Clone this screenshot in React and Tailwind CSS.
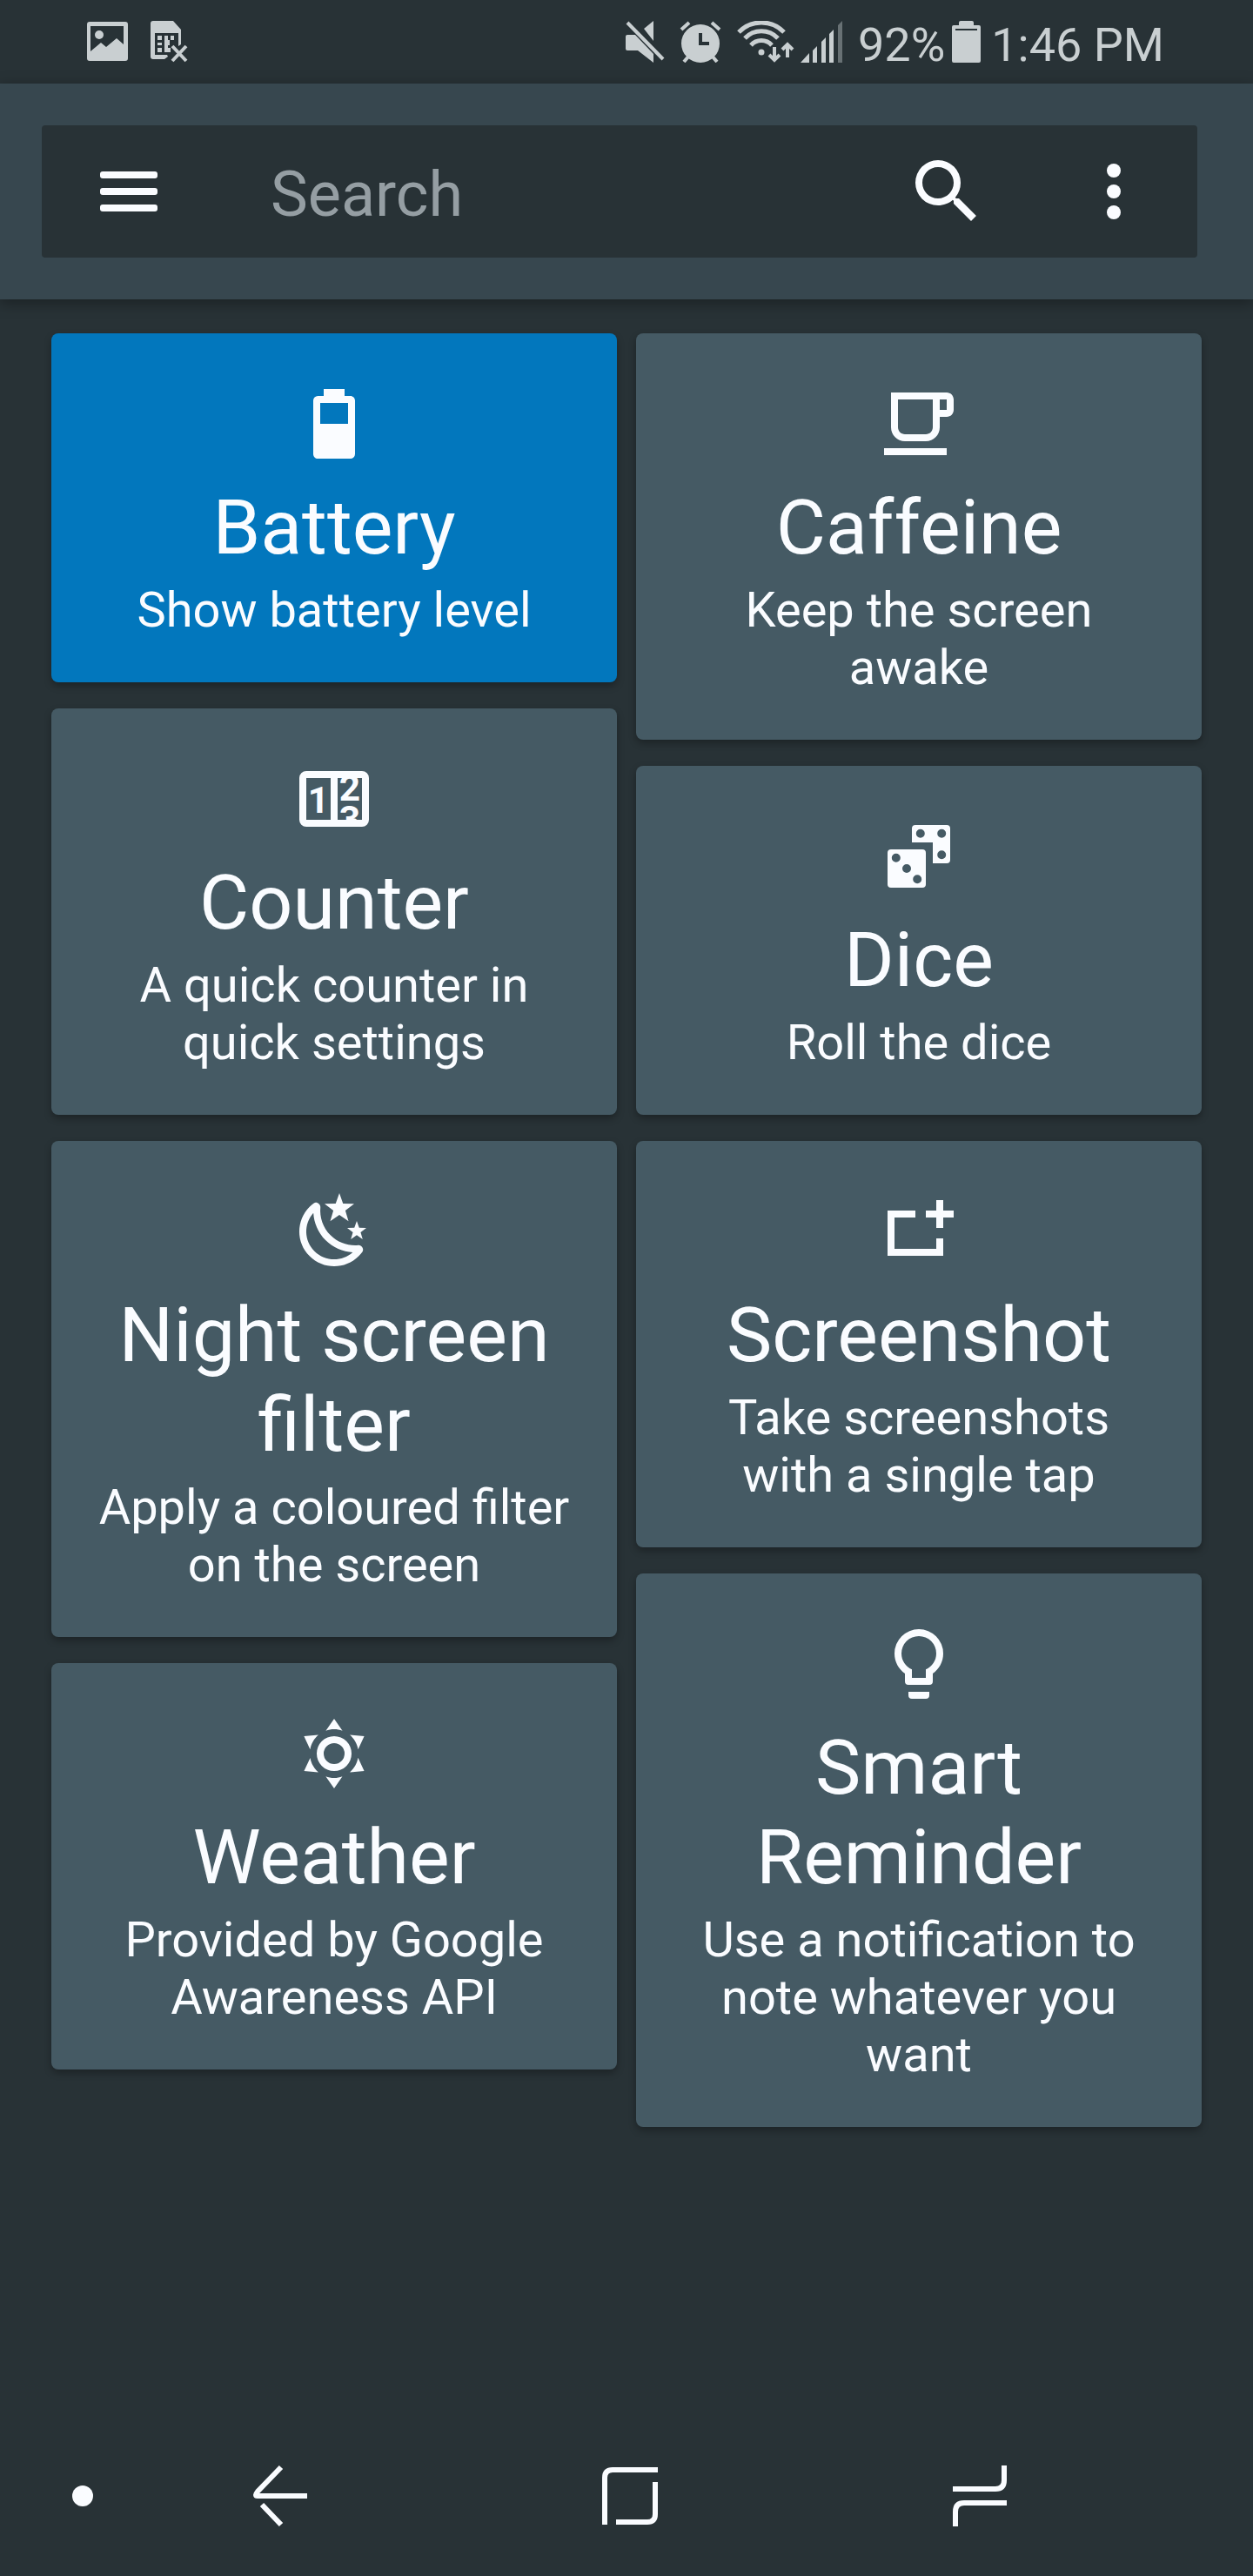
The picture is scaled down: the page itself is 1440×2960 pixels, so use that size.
import React, { useState } from 'react';

const tileIcons = {
  battery: (
    <path
      fillRule="evenodd"
      d="M16.67 4H15V2H9v2H7.33A1.33 1.33 0 0 0 6 5.33v15.34C6 21.4 6.6 22 7.33 22h9.34A1.33 1.33 0 0 0 18 20.67V5.33C18 4.6 17.4 4 16.67 4zM8 6h8v6H8z"
    />
  ),
  cup: (
    <path d="M16 5v8c0 1.1-.9 2-2 2H8c-1.1 0-2-.9-2-2V5h10m4-2H4v10c0 2.21 1.79 4 4 4h6c2.21 0 4-1.79 4-4v-3h2c1.1 0 2-.9 2-2V5c0-1.1-.9-2-2-2zm-2 5V5h2v3h-2zm2 11H2v2h18v-2z" />
  ),
  counter: (
    <>
      <clipPath id="counter-window">
        <rect x="4" y="6" width="16" height="12" />
      </clipPath>
      <path fillRule="evenodd" d="M4 4h16a2 2 0 0 1 2 2v12a2 2 0 0 1-2 2H4a2 2 0 0 1-2-2V6a2 2 0 0 1 2-2zM4 6v12h7V6zM13 6v12h7V6z" />
      <g clipPath="url(#counter-window)" fontSize="10.6" fontWeight="700" textAnchor="middle">
        <text x="7.5" y="16">1</text>
        <text x="16.5" y="12.5">2</text>
        <text x="16.5" y="21.4">3</text>
      </g>
    </>
  ),
  dice: (
    <path
      fillRule="evenodd"
      d="M4 10h9a1 1 0 0 1 1 1v9a1 1 0 0 1-1 1H4a1 1 0 0 1-1-1v-9a1 1 0 0 1 1-1zm1.45 1.2a1.25 1.25 0 1 0 0 2.5 1.25 1.25 0 0 0 0-2.5zm3.05 3.05a1.25 1.25 0 1 0 0 2.5 1.25 1.25 0 0 0 0-2.5zm3.05 3.05a1.25 1.25 0 1 0 0 2.5 1.25 1.25 0 0 0 0-2.5zM11 3h9a1 1 0 0 1 1 1v9a1 1 0 0 1-1 1h-4V8h-6V4a1 1 0 0 1 1-1zm1.45 1.2a1.25 1.25 0 1 0 0 2.5 1.25 1.25 0 0 0 0-2.5zm6.1 0a1.25 1.25 0 1 0 0 2.5 1.25 1.25 0 0 0 0-2.5zm0 6.1a1.25 1.25 0 1 0 0 2.5 1.25 1.25 0 0 0 0-2.5z"
    />
  ),
  night: (
    <path d="M17.75,4.09L15.22,6.03L16.13,9.09L13.5,7.28L10.87,9.09L11.78,6.03L9.25,4.09L12.44,4L13.5,1L14.56,4L17.75,4.09M21.25,11L19.61,12.25L20.2,14.23L18.5,13.06L16.8,14.23L17.39,12.25L15.75,11L17.81,10.95L18.5,9L19.19,10.95L21.25,11M18.97,15.95C19.8,15.87 20.69,17.05 20.16,17.8C19.84,18.25 19.5,18.67 19.08,19.07C15.17,23 8.84,23 4.94,19.07C1.03,15.17 1.03,8.83 4.94,4.93C5.34,4.53 5.76,4.17 6.21,3.85C6.96,3.32 8.14,4.21 8.06,5.04C7.79,7.9 8.75,10.87 10.95,13.06C13.14,15.26 16.1,16.22 18.97,15.95M17.33,17.97C14.5,17.81 11.7,16.64 9.53,14.5C7.36,12.31 6.2,9.5 6.04,6.68C3.23,9.82 3.34,14.64 6.35,17.66C9.37,20.67 14.19,20.78 17.33,17.97Z" />
  ),
  screenshot: <path d="M3 6h8v2H5v9h12v-3h2v5H3zM17 3h2v3h3v2h-3v3h-2V8h-3V6h3z" />,
  sun: (
    <path d="M12,7A5,5 0 0,1 17,12A5,5 0 0,1 12,17A5,5 0 0,1 7,12A5,5 0 0,1 12,7M12,9A3,3 0 0,0 9,12A3,3 0 0,0 12,15A3,3 0 0,0 15,12A3,3 0 0,0 12,9M12,2L14.39,5.42C13.65,5.15 12.84,5 12,5C11.16,5 10.35,5.15 9.61,5.42L12,2M3.34,7L7.5,6.65C6.9,7.16 6.36,7.78 5.94,8.5C5.5,9.24 5.25,10 5.11,10.79L3.34,7M3.36,17L5.12,13.23C5.26,14 5.53,14.78 5.95,15.5C6.37,16.24 6.91,16.86 7.5,17.37L3.36,17M20.65,7L18.88,10.79C18.74,10 18.47,9.23 18.05,8.5C17.63,7.78 17.1,7.15 16.5,6.64L20.65,7M20.64,17L16.5,17.36C17.09,16.85 17.62,16.22 18.04,15.5C18.46,14.77 18.73,14 18.87,13.21L20.64,17M12,22L9.59,18.56C10.33,18.83 11.14,19 12,19C12.82,19 13.63,18.83 14.37,18.56L12,22Z" />
  ),
  bulb: (
    <path d="M12,2A7,7 0 0,1 19,9C19,11.38 17.81,13.47 16,14.74V17A1,1 0 0,1 15,18H9A1,1 0 0,1 8,17V14.74C6.19,13.47 5,11.38 5,9A7,7 0 0,1 12,2M9,21V20H15V21A1,1 0 0,1 14,22H10A1,1 0 0,1 9,21M12,4A5,5 0 0,0 7,9C7,11.05 8.23,12.81 10,13.58V16H14V13.58C15.77,12.81 17,11.05 17,9A5,5 0 0,0 12,4Z" />
  )
};

const columns = [
  [
    { id: 'battery', icon: 'battery', title: 'Battery', text: 'Show battery level' },
    { id: 'counter', icon: 'counter', title: 'Counter', text: 'A quick counter in quick settings' },
    { id: 'night', icon: 'night', title: 'Night screen filter', text: 'Apply a coloured filter on the screen' },
    { id: 'weather', icon: 'sun', title: 'Weather', text: 'Provided by Google Awareness API' }
  ],
  [
    { id: 'caffeine', icon: 'cup', title: 'Caffeine', text: 'Keep the screen awake' },
    { id: 'dice', icon: 'dice', title: 'Dice', text: 'Roll the dice' },
    { id: 'screenshot', icon: 'screenshot', title: 'Screenshot', text: 'Take screenshots with a single tap' },
    { id: 'reminder', icon: 'bulb', title: 'Smart Reminder', text: 'Use a notification to note whatever you want' }
  ]
];

const StatusBar = () => (
  <div className="flex h-24 items-center justify-between bg-[#283236] pr-[102px] pl-[100px] text-[#c9cfd1]">
    <div className="flex items-center gap-[26px]">
      {/* Picture */}
      <svg className="h-12 w-[47px]" viewBox="0 0 47 48" fill="currentColor">
        <path fillRule="evenodd" d="M3 1h41a3 3 0 0 1 3 3v39a3 3 0 0 1-3 3H3a3 3 0 0 1-3-3V4a3 3 0 0 1 3-3zM4 6v29l12-10 6 5 12-10 8 7V6z" />
        <circle cx="14" cy="16" r="5" />
      </svg>
      {/* SIM missing */}
      <svg className="h-12 w-[43px]" viewBox="0 0 43 48" fill="currentColor">
        <path fillRule="evenodd" d="M3 0h23l9 10v17l-3 2V14H5v25h14l1 2-4 3H3a3 3 0 0 1-3-3V3a3 3 0 0 1 3-3z" />
        <path d="M8 17h5v5H8zM8 25h5v3H8zM8 31h5v5H8zM16 17h4v19h-4zM20 22h2v6h-2zM23 17h4v5h-4zM20 31h3v5h-3z" />
        <path d="M25 29l16 17M41 29L25 46" stroke="currentColor" strokeWidth="4" fill="none" />
      </svg>
    </div>
    <div className="flex items-center">
      {/* Muted */}
      <svg className="h-12 w-[46px]" viewBox="0 0 46 48" fill="currentColor">
        <path d="M21 9L32 0v23zM2 16h9l21 22v10L14 34H2a2 2 0 0 1-2-2V18a2 2 0 0 1 2-2z" />
        <path d="M2 2l41 42" stroke="currentColor" strokeWidth="4" />
      </svg>
      {/* Alarm */}
      <svg className="ml-4 h-12 w-12" viewBox="0 0 48 48" fill="currentColor">
        <path fillRule="evenodd" d="M24 4a22 22 0 1 1 0 44 22 22 0 0 1 0-44zM22 14v14h12v-4h-8V14z" />
        <path d="M2 10l9-8M46 10l-9-8M11 40l-6 7M37 40l6 7" stroke="currentColor" strokeWidth="4" />
      </svg>
      {/* Wi-Fi */}
      <svg className="ml-[18px] h-12 w-[66px]" viewBox="0 0 66 48" fill="none" stroke="currentColor" strokeWidth="5">
        <path d="M2 13a36 36 0 0 1 52 0M9 20a26 26 0 0 1 38 0M16 28a16 16 0 0 1 24 0" />
        <circle cx="28" cy="36" r="3.5" fill="currentColor" stroke="none" />
        <path d="M43 30v14M58 42V28" strokeWidth="4" />
        <path d="M37 39l6 6 6-6M52 33l6-6 6 6" strokeWidth="4" />
      </svg>
      {/* Signal */}
      <svg className="ml-[7px] h-12 w-[50px]" viewBox="0 0 50 48" fill="currentColor">
        <path d="M0 48L10 37v11zM14 34l5-5v19h-5zM24 24l5-5v29h-5zM33 15l5-5v38h-5z" />
        <path d="M43 5l5-5v48h-5z" opacity="0.4" />
      </svg>
      <span className="ml-4 pt-2 text-[54px] leading-[64px]">92%</span>
      {/* Charge */}
      <svg className="ml-2 h-12 w-[33px]" viewBox="0 0 33 48" fill="currentColor">
        <path fillRule="evenodd" d="M10 0h13a2 2 0 0 1 2 2v3h6a2 2 0 0 1 2 2v39a2 2 0 0 1-2 2H2a2 2 0 0 1-2-2V7a2 2 0 0 1 2-2h6V2a2 2 0 0 1 2-2zM4 9v2h25V9z" />
      </svg>
      <span className="ml-3 pt-2 text-[54px] leading-[64px]">1:46 PM</span>
    </div>
  </div>
);

const SearchHeader = ({ value, onChange }) => (
  <header className="bg-[#37474f] pt-12 pr-16 pb-12 pl-12 shadow-[0_4px_16px_rgba(0,0,0,0.35)]">
    <div className="flex h-[152px] items-center rounded bg-[#283236] pr-12 pl-[52px] text-[#fafcff]">
      <button type="button" aria-label="Menu">
        <svg className="size-24" viewBox="0 0 96 96" fill="currentColor">
          <rect x="15" y="25" width="66" height="8" rx="3" />
          <rect x="15" y="44" width="66" height="8" rx="3" />
          <rect x="15" y="63" width="66" height="8" rx="3" />
        </svg>
      </button>
      <input
        type="text"
        aria-label="Search"
        placeholder="Search"
        value={value}
        onChange={onChange}
        className="ml-[115px] h-24 min-w-0 flex-1 bg-transparent pt-[6px] text-[72px] leading-[90px] outline-none placeholder:text-[#959ea3]"
      />
      <button type="button" aria-label="Submit search">
        <svg className="size-24" viewBox="0 0 24 24" fill="currentColor">
          <path d="M15.5 14h-.79l-.28-.27A6.471 6.471 0 0 0 16 9.5 6.5 6.5 0 1 0 9.5 16c1.61 0 3.09-.59 4.23-1.57l.27.28v.79l5 4.99L20.49 19l-4.99-5zm-6 0C7.01 14 5 11.99 5 9.5S7.01 5 9.5 5 14 7.01 14 9.5 11.99 14 9.5 14z" />
        </svg>
      </button>
      <button type="button" aria-label="More options" className="ml-24">
        <svg className="size-24" viewBox="0 0 24 24" fill="currentColor">
          <circle cx="12" cy="6" r="2" />
          <circle cx="12" cy="12" r="2" />
          <circle cx="12" cy="18" r="2" />
        </svg>
      </button>
    </div>
  </header>
);

const Tile = ({ tile, active, onClick }) => (
  <button
    type="button"
    aria-pressed={active}
    onClick={onClick}
    className={`flex flex-col items-center rounded-lg px-12 pt-14 pb-[50px] text-center text-[#fafcff] shadow-[0_4px_8px_rgba(0,0,0,0.3)] ${active ? 'bg-[#0277bd]' : 'bg-[#455a64]'}`}
  >
    <svg className="size-24" viewBox="0 0 24 24" fill="currentColor">
      {tileIcons[tile.icon]}
    </svg>
    <span className="mt-[19px] text-[88px] leading-[103px]">{tile.title}</span>
    <span className="mt-[11px] text-[56px] leading-[66px]">{tile.text}</span>
  </button>
);

const NavBar = () => (
  <nav className="flex h-[184px] items-center gap-[14px] pr-[112px] pl-[83px] text-[#fafcff]">
    <span className="size-6 rounded-full bg-[#fafcff]" />
    <div className="grid flex-1 grid-cols-3 justify-items-center">
      <button type="button" aria-label="Back">
        <svg className="h-[72px] w-16" viewBox="0 0 64 72" fill="none" stroke="currentColor" strokeWidth="6">
          <path d="M33 3L6 31q-4 5 0 5h57M11 46l22 23" />
        </svg>
      </button>
      <button type="button" aria-label="Home">
        <svg className="h-[72px] w-16" viewBox="0 0 64 72" fill="none" stroke="currentColor" strokeWidth="6">
          <path d="M3 69V15Q3 6 12 6h52M61 20v37q0 9-9 9H16" />
        </svg>
      </button>
      <button type="button" aria-label="Recent apps">
        <svg className="h-[72px] w-16" viewBox="0 0 64 72" fill="none" stroke="currentColor" strokeWidth="6">
          <path d="M59 1v17q0 10-10 10H0M3 71V54q0-10 10-10h49" />
        </svg>
      </button>
    </div>
  </nav>
);

const App = () => {
  const [search, setSearch] = useState('');
  const [activeTile, setActiveTile] = useState('battery');

  const visible = (tile) => tile.title.toLowerCase().includes(search.toLowerCase());

  return (
    <div className="flex min-h-screen flex-col bg-[#283236] font-[Roboto,sans-serif]">
      <StatusBar />
      <SearchHeader value={search} onChange={(e) => setSearch(e.target.value)} />
      <main className="grid flex-1 grid-cols-2 items-start gap-[22px] px-[59px] pt-[39px] pb-12">
        {columns.map((tiles, i) => (
          <div key={i} className="flex flex-col gap-[30px]">
            {tiles.filter(visible).map((tile) => (
              <Tile
                key={tile.id}
                tile={tile}
                active={tile.id === activeTile}
                onClick={() => setActiveTile(tile.id)}
              />
            ))}
          </div>
        ))}
      </main>
      <NavBar />
    </div>
  );
};

export default App;
